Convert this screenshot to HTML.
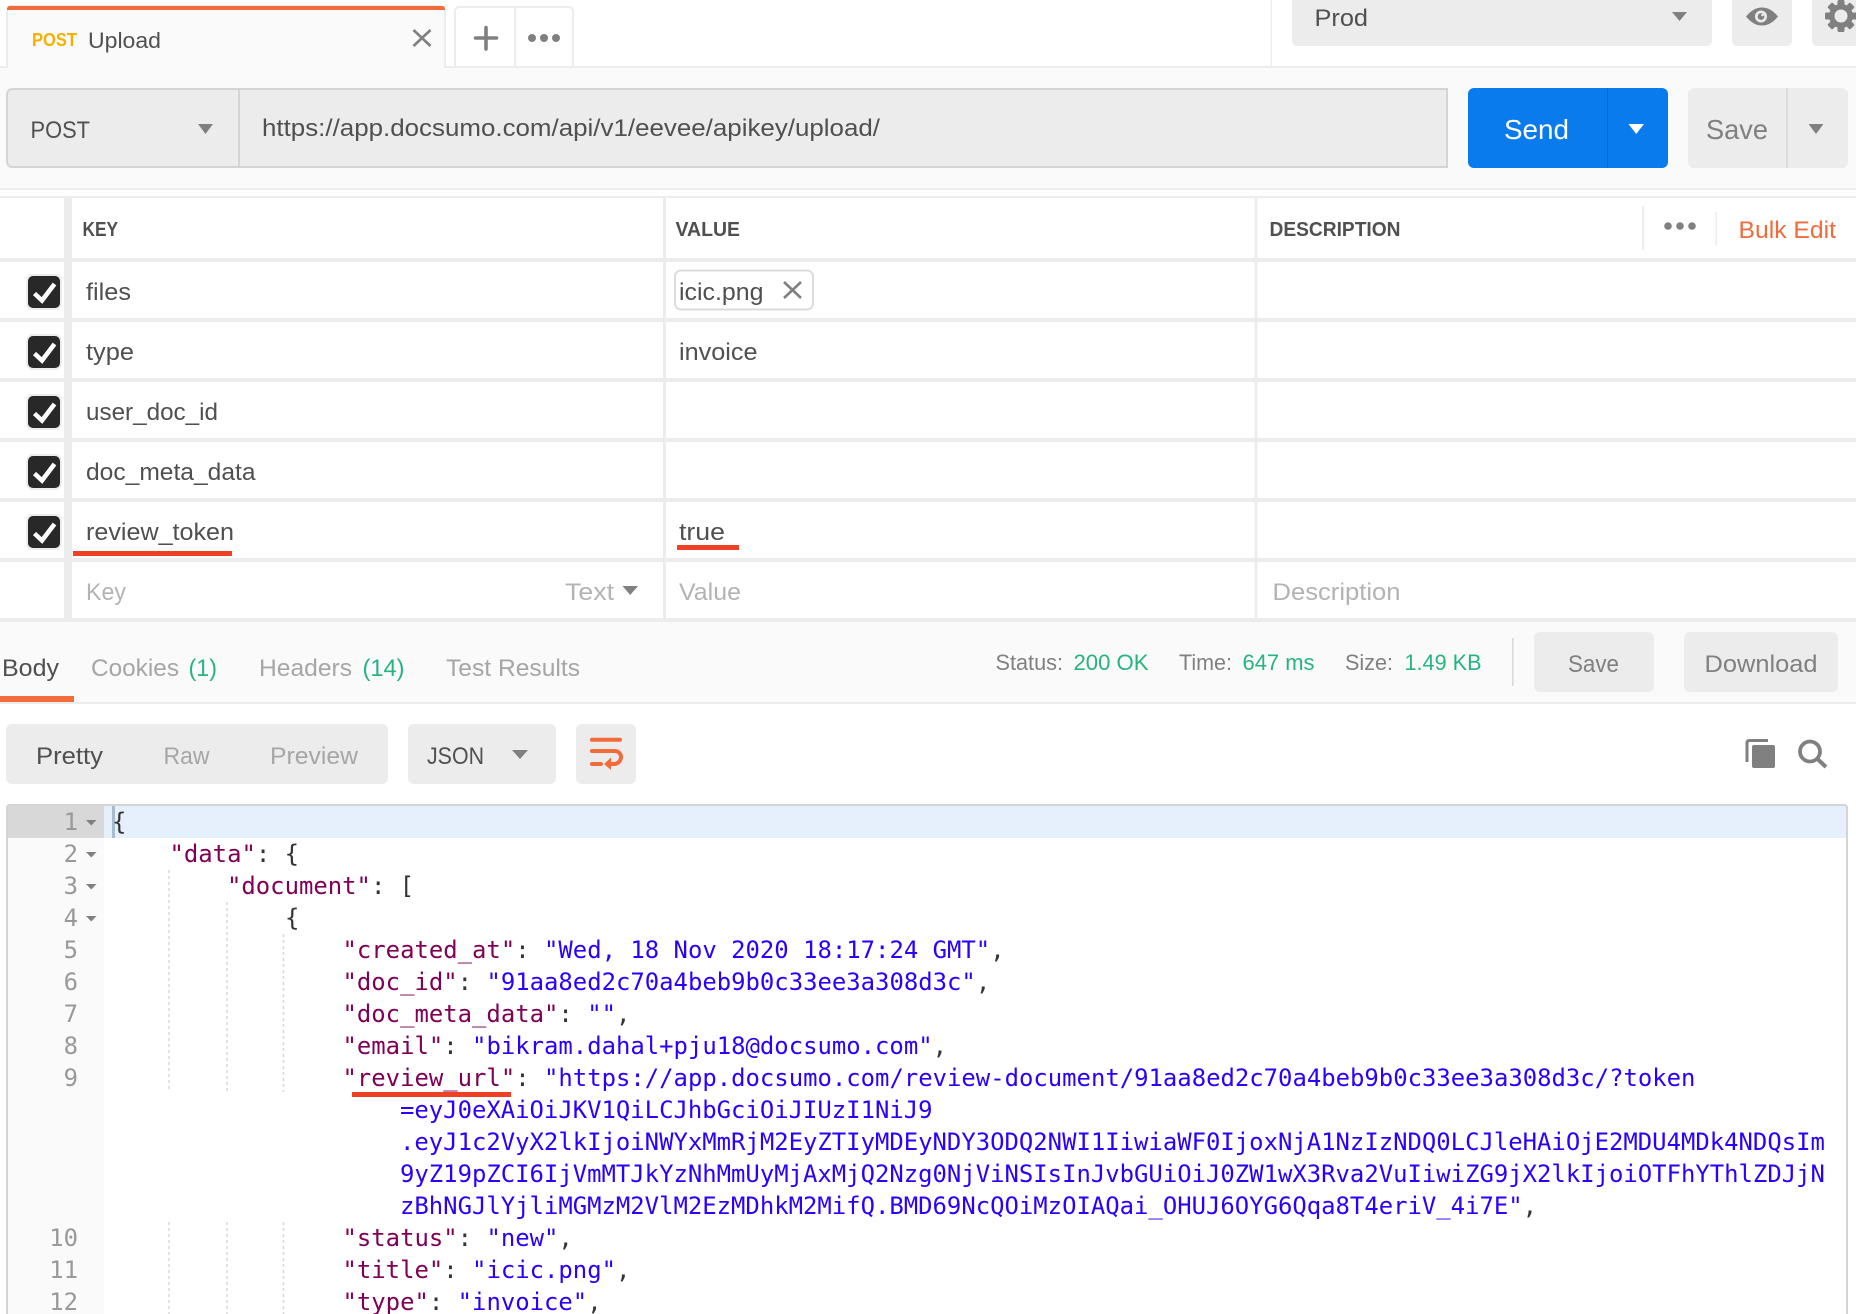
<!DOCTYPE html>
<html lang="en">
<head>
<meta charset="utf-8">
<title>Postman Upload</title>
<style>
html,body{margin:0;padding:0;background:#fff;width:1856px;height:1314px;overflow:hidden}
svg{display:block}
text{font-family:"Liberation Sans",sans-serif;font-size:24.5px;fill:#505050}
.g{fill:#808080}
.l{fill:#b3b3b3}
.t{fill:#a6a6a6}
.h{font-size:20px;font-weight:bold;fill:#505050}
.s{font-size:22px;fill:#808080}
.ok{font-size:22px;fill:#26b47f}
.gr{fill:#26b47f}
.m{font-family:"DejaVu Sans Mono",monospace;font-size:23.92px;fill:#333;white-space:pre}
.n{font-family:"DejaVu Sans Mono",monospace;font-size:23.92px;fill:#999}
.k{fill:#7f0055}
.v{fill:#2a00ff}
</style>
</head>
<body>
<svg width="1856" height="1314" viewBox="0 0 1856 1314" xmlns="http://www.w3.org/2000/svg">
<rect width="1856" height="1314" fill="#fff"/>

<!-- top strip -->
<rect x="0" y="68" width="1856" height="120" fill="#fafafa"/>
<rect x="0" y="66" width="1856" height="2" fill="#ececec"/>
<rect x="1270.500" y="0" width="1.500" height="66" fill="#ececec"/>

<!-- tab -->
<path d="M7 68V12q0-6 6-6H439q6 0 6 6V68" fill="#fafafa" stroke="#ececec" stroke-width="2"/>
<path d="M7 10V9q0-3 3-3H442q3 0 3 3v1z" fill="#f26b3a"/>
<text x="32" y="46" textLength="45" lengthAdjust="spacingAndGlyphs" style="font-size:18px;font-weight:bold;fill:#f5b000">POST</text>
<text x="88" y="48" textLength="73" lengthAdjust="spacingAndGlyphs" style="font-size:22.5px">Upload</text>
<path d="M413.500 30L430.500 46M430.500 30L413.500 46" stroke="#808080" stroke-width="2.600" fill="none"/>

<!-- + and ... -->
<path d="M455 66V12q0-5 5-5H568q5 0 5 5V66" fill="#fff" stroke="#ececec" stroke-width="2"/>
<rect x="514" y="7" width="2" height="59" fill="#ececec"/>
<path d="M486 27.500V49M475.500 38H496.500" stroke="#808080" stroke-width="3.600" stroke-linecap="round" fill="none"/>
<circle cx="532" cy="38" r="4" fill="#808080"/><circle cx="544" cy="38" r="4" fill="#808080"/><circle cx="556" cy="38" r="4" fill="#808080"/>

<!-- env selector -->
<path d="M1292 0H1712V40q0 6-6 6H1298q-6 0-6-6z" fill="#ececec"/>
<text x="1314.500" y="26" textLength="53.500" lengthAdjust="spacingAndGlyphs">Prod</text>
<path d="M1672 12H1687L1679.500 21z" fill="#808080"/>
<path d="M1732 0H1792V40q0 6-6 6H1738q-6 0-6-6z" fill="#ececec"/>
<path d="M1746 16.500C1751 10.500 1756 7.500 1762 7.500S1773 10.500 1778 16.500C1773 22.500 1768 25.500 1762 25.500S1751 22.500 1746 16.500z" fill="#808080"/>
<circle cx="1761" cy="16.500" r="6" fill="#ececec"/><circle cx="1761" cy="16.500" r="3.400" fill="#808080"/><circle cx="1762.500" cy="15" r="1.300" fill="#ececec"/>
<path d="M1812 0H1856V46H1818q-6 0-6-6z" fill="#ececec"/>
<g fill="#808080" transform="translate(1841 16)">
<circle r="12"/>
<rect x="-3.500" y="-16" width="7" height="32" rx="1.500"/>
<rect x="-3.500" y="-16" width="7" height="32" rx="1.500" transform="rotate(45)"/>
<rect x="-3.500" y="-16" width="7" height="32" rx="1.500" transform="rotate(90)"/>
<rect x="-3.500" y="-16" width="7" height="32" rx="1.500" transform="rotate(135)"/>
<circle r="6.500" fill="#ececec"/>
</g>

<!-- url bar -->
<path d="M7 95q0-6 6-6H1447V167H13q-6 0-6-6z" fill="#ececec" stroke="#d4d4d4" stroke-width="2"/>
<rect x="238" y="89" width="2" height="78" fill="#d4d4d4"/>
<text x="30.500" y="138" textLength="59.500" lengthAdjust="spacingAndGlyphs">POST</text>
<path d="M198 124H213L205.500 134z" fill="#808080"/>
<text x="262" y="136" textLength="618" lengthAdjust="spacingAndGlyphs">https://app.docsumo.com/api/v1/eevee/apikey/upload/</text>

<!-- send -->
<rect x="1468" y="88" width="200" height="80" rx="6" fill="#097bed"/>
<rect x="1607" y="88" width="1" height="80" fill="#0a6bcc"/>
<text x="1504" y="139" textLength="65" lengthAdjust="spacingAndGlyphs" style="font-size:28px;fill:#fff">Send</text>
<path d="M1628.500 124H1644L1636.200 134z" fill="#fff"/>

<!-- save -->
<rect x="1688" y="88" width="160" height="80" rx="6" fill="#ececec"/>
<rect x="1786" y="88" width="2" height="80" fill="#dcdcdc"/>
<text x="1706" y="139" textLength="62" lengthAdjust="spacingAndGlyphs" style="font-size:28px;fill:#808080">Save</text>
<path d="M1808.500 124H1823.500L1816 134z" fill="#808080"/>
<rect x="0" y="188" width="1856" height="2" fill="#ececec"/>

<!-- params table lines -->
<g fill="#ececec">
<rect x="0" y="196" width="1856" height="2"/>
<rect x="64" y="198" width="8" height="424"/>
<rect x="663" y="198" width="3" height="424"/>
<rect x="1254.500" y="198" width="3" height="424"/>
<rect x="0" y="258" width="1856" height="4"/>
<rect x="0" y="318" width="1856" height="4"/>
<rect x="0" y="378" width="1856" height="4"/>
<rect x="0" y="438" width="1856" height="4"/>
<rect x="0" y="498" width="1856" height="4"/>
<rect x="0" y="558" width="1856" height="4"/>
<rect x="0" y="618" width="1856" height="4"/>
<rect x="1642" y="206" width="2" height="44"/>
<rect x="1715.500" y="212" width="1.500" height="34"/>
</g>

<text class="h" x="82.500" y="236" textLength="35.500" lengthAdjust="spacingAndGlyphs">KEY</text>
<text class="h" x="675.500" y="236" textLength="64.500" lengthAdjust="spacingAndGlyphs">VALUE</text>
<text class="h" x="1269.500" y="236" textLength="131" lengthAdjust="spacingAndGlyphs">DESCRIPTION</text>
<circle cx="1668" cy="226" r="3.800" fill="#808080"/><circle cx="1680" cy="226" r="3.800" fill="#808080"/><circle cx="1692" cy="226" r="3.800" fill="#808080"/>
<text x="1738.500" y="238" textLength="97.500" lengthAdjust="spacingAndGlyphs" style="fill:#f26b3a">Bulk Edit</text>

<!-- checkboxes -->
<g>
<rect x="27" y="275" width="34" height="34" rx="6" fill="#282828" stroke="#ececec" stroke-width="2"/>
<rect x="27" y="335" width="34" height="34" rx="6" fill="#282828" stroke="#ececec" stroke-width="2"/>
<rect x="27" y="395" width="34" height="34" rx="6" fill="#282828" stroke="#ececec" stroke-width="2"/>
<rect x="27" y="455" width="34" height="34" rx="6" fill="#282828" stroke="#ececec" stroke-width="2"/>
<rect x="27" y="515" width="34" height="34" rx="6" fill="#282828" stroke="#ececec" stroke-width="2"/>
<path d="M34.500 293.500L42 300.500L54.500 284M34.500 353.500L42 360.500L54.500 344M34.500 413.500L42 420.500L54.500 404M34.500 473.500L42 480.500L54.500 464M34.500 533.500L42 540.500L54.500 524" fill="none" stroke="#fff" stroke-width="4.600"/>
</g>

<!-- rows -->
<text x="86" y="300" textLength="45" lengthAdjust="spacingAndGlyphs">files</text>
<text x="86" y="360" textLength="48" lengthAdjust="spacingAndGlyphs">type</text>
<text x="86" y="420" textLength="132" lengthAdjust="spacingAndGlyphs">user_doc_id</text>
<text x="86" y="480" textLength="169.500" lengthAdjust="spacingAndGlyphs">doc_meta_data</text>
<text x="86" y="540" textLength="148" lengthAdjust="spacingAndGlyphs">review_token</text>
<rect x="73" y="551" width="159" height="5" fill="#ee4024"/>

<rect x="675" y="270.500" width="138" height="39" rx="6" fill="#fff" stroke="#dcdcdc" stroke-width="2"/>
<text x="679" y="300" textLength="84.500" lengthAdjust="spacingAndGlyphs">icic.png</text>
<path d="M784 282L801 298M801 282L784 298" stroke="#808080" stroke-width="2.600" fill="none"/>
<text x="679" y="360" textLength="78.500" lengthAdjust="spacingAndGlyphs">invoice</text>
<text x="679" y="540" textLength="46" lengthAdjust="spacingAndGlyphs">true</text>
<rect x="677" y="545" width="62" height="5" fill="#ee4024"/>

<text class="l" x="86" y="600" textLength="40" lengthAdjust="spacingAndGlyphs">Key</text>
<text class="l" x="565" y="600" textLength="49" lengthAdjust="spacingAndGlyphs">Text</text>
<path d="M622.500 586H638L630.200 595z" fill="#808080"/>
<text class="l" x="679" y="600" textLength="62" lengthAdjust="spacingAndGlyphs">Value</text>
<text class="l" x="1272.500" y="600" textLength="128" lengthAdjust="spacingAndGlyphs">Description</text>

<!-- response tabs -->
<rect x="0" y="622" width="1856" height="80" fill="#fafafa"/>
<rect x="0" y="702" width="1856" height="2" fill="#ececec"/>
<rect x="0" y="696" width="74" height="6" fill="#f26b3a"/>
<text x="2" y="676" textLength="57" lengthAdjust="spacingAndGlyphs">Body</text>
<text class="t" x="91" y="676" textLength="88" lengthAdjust="spacingAndGlyphs">Cookies</text>
<text class="gr" x="188.500" y="676" textLength="28.500" lengthAdjust="spacingAndGlyphs">(1)</text>
<text class="t" x="259" y="676" textLength="93" lengthAdjust="spacingAndGlyphs">Headers</text>
<text class="gr" x="362.500" y="676" textLength="42" lengthAdjust="spacingAndGlyphs">(14)</text>
<text class="t" x="446" y="676" textLength="134" lengthAdjust="spacingAndGlyphs">Test Results</text>

<text class="s" x="995.500" y="670" textLength="67.500" lengthAdjust="spacingAndGlyphs">Status:</text>
<text class="ok" x="1073.500" y="670" textLength="75" lengthAdjust="spacingAndGlyphs">200 OK</text>
<text class="s" x="1179" y="670" textLength="53" lengthAdjust="spacingAndGlyphs">Time:</text>
<text class="ok" x="1242.500" y="670" textLength="72" lengthAdjust="spacingAndGlyphs">647 ms</text>
<text class="s" x="1345" y="670" textLength="48" lengthAdjust="spacingAndGlyphs">Size:</text>
<text class="ok" x="1404.500" y="670" textLength="77" lengthAdjust="spacingAndGlyphs">1.49 KB</text>
<rect x="1512" y="638" width="1.500" height="48" fill="#d8d8d8"/>
<rect x="1534" y="632" width="120" height="60" rx="6" fill="#ececec"/>
<text class="g" x="1568" y="672" textLength="51" lengthAdjust="spacingAndGlyphs">Save</text>
<rect x="1684" y="632" width="154" height="60" rx="6" fill="#ececec"/>
<text class="g" x="1704.500" y="672" textLength="113" lengthAdjust="spacingAndGlyphs">Download</text>

<!-- toolbar -->
<rect x="6" y="724" width="382" height="60" rx="6" fill="#ececec"/>
<text x="36" y="764" textLength="67" lengthAdjust="spacingAndGlyphs">Pretty</text>
<text class="t" x="163.500" y="764" textLength="46" lengthAdjust="spacingAndGlyphs">Raw</text>
<text class="t" x="270" y="764" textLength="88" lengthAdjust="spacingAndGlyphs">Preview</text>
<rect x="408" y="724" width="148" height="60" rx="6" fill="#ececec"/>
<text x="427" y="764" textLength="57" lengthAdjust="spacingAndGlyphs">JSON</text>
<path d="M512 750H528L520 759z" fill="#808080"/>
<rect x="576" y="724" width="60" height="60" rx="6" fill="#ececec"/>
<g fill="none" stroke="#f26b3a" stroke-width="4" stroke-linecap="round">
<path d="M592 739.700H620"/>
<path d="M592 751H615a6 6 0 0 1 6 6v0a7 7 0 0 1-7 7H608"/>
<path d="M592 764H601"/>
</g>
<path d="M604 764L611 757.500V770z" fill="#f26b3a"/>

<path d="M1747 762V743q0-2.500 2.500-2.500H1768" fill="none" stroke="#808080" stroke-width="3"/>
<rect x="1752" y="745" width="23" height="23" rx="2" fill="#808080"/>
<circle cx="1810" cy="751.500" r="10" fill="none" stroke="#808080" stroke-width="3.800"/>
<path d="M1817.500 759L1826 767" stroke="#808080" stroke-width="4" fill="none"/>

<!-- editor -->
<rect x="7" y="804" width="1841" height="510" fill="#fff"/>
<rect x="8" y="806" width="96" height="508" fill="#fafafa"/>
<rect x="8" y="806" width="96" height="32" fill="#d8d8d8"/>
<rect x="104" y="806" width="1742" height="32" fill="#e6f0fc"/>
<rect x="112" y="806" width="3" height="32" fill="#a8bcd0"/>
<path d="M7 1314V808q0-3 3-3H1844q3 0 3 3V1314" fill="none" stroke="#d4d4d4" stroke-width="2"/>

<!-- indent guides -->
<g stroke="#d8d8d8" stroke-width="1.500" stroke-dasharray="3 3" fill="none">
<path d="M169 870V1092M169 1222V1314"/>
<path d="M227 902V1092M227 1222V1314"/>
<path d="M283.500 934V1092M283.500 1222V1314"/>
</g>

<!-- gutter numbers -->
<g text-anchor="end">
<text class="n" x="78" y="830">1</text>
<text class="n" x="78" y="862">2</text>
<text class="n" x="78" y="894">3</text>
<text class="n" x="78" y="926">4</text>
<text class="n" x="78" y="958">5</text>
<text class="n" x="78" y="990">6</text>
<text class="n" x="78" y="1022">7</text>
<text class="n" x="78" y="1054">8</text>
<text class="n" x="78" y="1086">9</text>
<text class="n" x="78" y="1246">10</text>
<text class="n" x="78" y="1278">11</text>
<text class="n" x="78" y="1310">12</text>
</g>
<path d="M86 820H96.500L91.200 825.500zM86 852H96.500L91.200 857.500zM86 884H96.500L91.200 889.500zM86 916H96.500L91.200 921.500z" fill="#808080"/>

<!-- code -->
<g xml:space="preserve">
<text class="m" x="112" y="830">{</text>
<text class="m" x="169.500" y="862"><tspan class="k">"data"</tspan>: {</text>
<text class="m" x="227" y="894"><tspan class="k">"document"</tspan>: [</text>
<text class="m" x="285" y="926">{</text>
<text class="m" x="342.500" y="958"><tspan class="k">"created_at"</tspan>: <tspan class="v">"Wed, 18 Nov 2020 18:17:24 GMT"</tspan>,</text>
<text class="m" x="342.500" y="990"><tspan class="k">"doc_id"</tspan>: <tspan class="v">"91aa8ed2c70a4beb9b0c33ee3a308d3c"</tspan>,</text>
<text class="m" x="342.500" y="1022"><tspan class="k">"doc_meta_data"</tspan>: <tspan class="v">""</tspan>,</text>
<text class="m" x="342.500" y="1054"><tspan class="k">"email"</tspan>: <tspan class="v">"bikram.dahal+pju18@docsumo.com"</tspan>,</text>
<text class="m" x="342.500" y="1086"><tspan class="k">"review_url"</tspan>: <tspan class="v">"https://app.docsumo.com/review-document/91aa8ed2c70a4beb9b0c33ee3a308d3c/?token</tspan></text>
<text class="m v" x="400" y="1118">=eyJ0eXAiOiJKV1QiLCJhbGciOiJIUzI1NiJ9</text>
<text class="m v" x="400" y="1150">.eyJ1c2VyX2lkIjoiNWYxMmRjM2EyZTIyMDEyNDY3ODQ2NWI1IiwiaWF0IjoxNjA1NzIzNDQ0LCJleHAiOjE2MDU4MDk4NDQsIm</text>
<text class="m v" x="400" y="1182">9yZ19pZCI6IjVmMTJkYzNhMmUyMjAxMjQ2Nzg0NjViNSIsInJvbGUiOiJ0ZW1wX3Rva2VuIiwiZG9jX2lkIjoiOTFhYThlZDJjN</text>
<text class="m" x="400" y="1214"><tspan class="v">zBhNGJlYjliMGMzM2VlM2EzMDhkM2MifQ.BMD69NcQOiMzOIAQai_OHUJ6OYG6Qqa8T4eriV_4i7E"</tspan>,</text>
<text class="m" x="342.500" y="1246"><tspan class="k">"status"</tspan>: <tspan class="v">"new"</tspan>,</text>
<text class="m" x="342.500" y="1278"><tspan class="k">"title"</tspan>: <tspan class="v">"icic.png"</tspan>,</text>
<text class="m" x="342.500" y="1310"><tspan class="k">"type"</tspan>: <tspan class="v">"invoice"</tspan>,</text>
</g>
<rect x="352" y="1092" width="159" height="5" fill="#ee4024"/>
</svg>
</body>
</html>
